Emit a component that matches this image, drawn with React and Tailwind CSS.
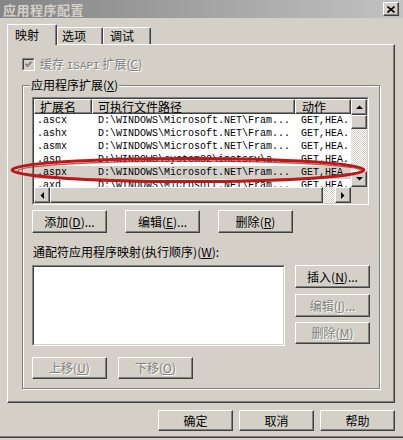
import React from 'react';

const cjk = "font-['Noto_Sans_CJK_SC','Liberation_Sans',sans-serif]";
const mono = "font-['Liberation_Mono',monospace]";
const raised =
  'border border-t-white border-l-white border-r-[#404040] border-b-[#404040] shadow-[inset_-1px_-1px_0_#808080] bg-[#d4d0c8]';
const checker =
  'bg-[repeating-conic-gradient(#ffffff_0_25%,#d4d0c8_0_50%)] bg-[length:2px_2px]';
const disabledText = 'text-[#808080] [text-shadow:1px_1px_0_#fff]';

function Mn({ c }) {
  return (
    <>
      (<span className="underline">{c}</span>)
    </>
  );
}

function Btn({ children, disabled, className = '' }) {
  return (
    <div
      className={`${raised} w-[75px] flex items-center justify-center text-[12px] leading-none ${
        disabled ? disabledText : 'text-black'
      } ${className}`}
    >
      {children}
    </div>
  );
}

function Arrow({ dir }) {
  const pts = {
    up: '0,4 3.5,0.5 7,4',
    down: '0,0 3.5,3.5 7,0',
    left: '4,0 0.5,3.5 4,7',
    right: '0,0 3.5,3.5 0,7',
  }[dir];
  const vertical = dir === 'up' || dir === 'down';
  return (
    <svg width={vertical ? 7 : 4} height={vertical ? 4 : 7} viewBox={vertical ? '0 0 7 4' : '0 0 4 7'}>
      <polygon points={pts} fill="#000" />
    </svg>
  );
}

function ScrollBtn({ dir }) {
  return (
    <div className={`${raised} w-[16px] h-[16px] shrink-0 flex items-center justify-center`}>
      <Arrow dir={dir} />
    </div>
  );
}

function Sunken({ className = '', innerClass = '', children }) {
  return (
    <div className={`border border-t-[#808080] border-l-[#808080] border-r-white border-b-white ${className}`}>
      <div
        className={`w-full h-full border border-t-[#404040] border-l-[#404040] border-r-[#d4d0c8] border-b-[#d4d0c8] ${innerClass}`}
      >
        {children}
      </div>
    </div>
  );
}

const rows = [
  ['.ascx', 'D:\\WINDOWS\\Microsoft.NET\\Fram...', 'GET,HEA.'],
  ['.ashx', 'D:\\WINDOWS\\Microsoft.NET\\Fram...', 'GET,HEA.'],
  ['.asmx', 'D:\\WINDOWS\\Microsoft.NET\\Fram...', 'GET,HEA.'],
  ['.asp', 'D:\\WINDOWS\\system32\\inetsrv\\a...', 'GET,HEA.'],
  ['.aspx', 'D:\\WINDOWS\\Microsoft.NET\\Fram...', 'GET,HEA.'],
  ['.axd', 'D:\\WINDOWS\\Microsoft.NET\\Fram...', 'GET,HEA.'],
];

function ListView() {
  return (
    <Sunken className="w-[337px] h-[108px]" innerClass="bg-white flex flex-col">
      <div className="flex h-[88px]">
        <div className="w-[317px] overflow-hidden">
          {/* header */}
          <div className={`flex h-[15px] text-[12px] leading-none ${cjk}`}>
            <div className={`${raised} w-[58px] shrink-0 flex items-center pl-[5px]`}>扩展名</div>
            <div className={`${raised} w-[203px] shrink-0 flex items-center pl-[5px]`}>可执行文件路径</div>
            <div className={`${raised} w-[56px] shrink-0 flex items-center pl-[6px]`}>动作</div>
          </div>
          {rows.map(([ext, path, act]) => (
            <div
              key={ext}
              className={`flex h-[13px] text-[10px] leading-[13px] whitespace-nowrap text-black ${mono} ${
                ext === '.aspx' ? 'bg-[#d4d0c8]' : ''
              }`}
            >
              <div className="w-[58px] shrink-0 pl-[3px] overflow-hidden">{ext}</div>
              <div className="w-[203px] shrink-0 pl-[6px] overflow-hidden">{path}</div>
              <div className="w-[56px] shrink-0 pl-[6px] overflow-hidden">{act}</div>
            </div>
          ))}
        </div>
        {/* vertical scrollbar */}
        <div className="w-[16px] flex flex-col">
          <ScrollBtn dir="up" />
          <div className={`${raised} h-[14px] w-[16px]`} />
          <div className={`flex-1 ${checker}`} />
          <ScrollBtn dir="down" />
        </div>
      </div>
      <div className="flex h-[16px]">
        <div className="w-[317px] flex">
          <ScrollBtn dir="left" />
          <div className={`${raised} w-[273px] h-[16px]`} />
          <div className={`flex-1 ${checker}`} />
          <ScrollBtn dir="right" />
        </div>
        <div className="w-[16px] bg-[#d4d0c8]" />
      </div>
    </Sunken>
  );
}

export default function App() {
  return (
    <div className={`relative w-[403px] h-[440px] overflow-hidden bg-[#d4d0c8] flex flex-col text-black ${cjk}`}>
      {/* Title bar */}
      <div className="h-[18px] flex items-center bg-gradient-to-r from-[#858585] to-[#c2c2c2] pl-[3px] pr-[4px]">
        <span className="text-[13px] font-bold text-[#d4d0c8] leading-none tracking-[0.5px]">应用程序配置</span>
        <div className={`${raised} ml-auto w-[16px] h-[14px] flex items-center justify-center`}>
          <svg width="8" height="7" viewBox="0 0 8 7">
            <path d="M0.5 0.5 L7.5 6.5 M7.5 0.5 L0.5 6.5" stroke="#000" strokeWidth="1.6" />
          </svg>
        </div>
      </div>

      {/* Tabs */}
      <div className="flex items-end h-[20px] mt-[6px] ml-[7px] text-[12px] leading-none">
        <div className="relative z-10 -mb-px h-[21px] w-[50px] bg-[#d4d0c8] border-l border-t border-r border-l-white border-t-white border-r-[#404040] shadow-[inset_-1px_0_0_#808080] rounded-t-[2px] flex items-center pl-[7px]">
          映射
        </div>
        <div className="h-[17px] w-[46px] border-l border-t border-r border-l-white border-t-white border-r-[#404040] shadow-[inset_-1px_0_0_#808080] rounded-t-[2px] flex items-center pl-[4px]">
          选项
        </div>
        <div className="h-[17px] w-[48px] border-l border-t border-r border-l-white border-t-white border-r-[#404040] shadow-[inset_-1px_0_0_#808080] rounded-t-[2px] flex items-center pl-[6px]">
          调试
        </div>
      </div>

      {/* Tab panel */}
      <div className="ml-[7px] w-[388px] h-[359px] border border-t-white border-l-white border-r-[#404040] border-b-[#404040] shadow-[inset_-1px_-1px_0_#808080] flex flex-col">
        {/* Checkbox */}
        <div className="mt-[13px] ml-[14px] h-[13px] flex items-center">
          <Sunken className="w-[13px] h-[13px]" innerClass="bg-[#d4d0c8] flex items-center justify-center">
            <svg width="7" height="7" viewBox="0 0 7 7">
              <path d="M0.5 3 L2.5 5 L6.5 1" fill="none" stroke="#808080" strokeWidth="1.8" />
            </svg>
          </Sunken>
          <span className={`ml-[5px] text-[12px] leading-none ${disabledText}`}>
            缓存 <span className={`${mono} text-[11px]`}>ISAPI</span> 扩展<Mn c="C" />
          </span>
        </div>

        {/* Group box */}
        <div className="relative mt-[14px] ml-[14px] w-[358px] h-[304px] border border-[#808080] shadow-[1px_1px_0_#fff,inset_1px_1px_0_#fff] flex flex-col">
          <span className="absolute -top-[7px] left-[7px] px-[1px] bg-[#d4d0c8] text-[12px] leading-[12px]">
            应用程序扩展<Mn c="X" />
          </span>

          <div className="mt-[11px] ml-[9px]">
            <ListView />
          </div>

          <div className="flex mt-[5px] ml-[9px] gap-[18px]">
            <Btn className="h-[23px]">添加<Mn c="D" />...</Btn>
            <Btn className="h-[23px]">编辑<Mn c="E" />...</Btn>
            <Btn className="h-[23px]">删除<Mn c="R" /></Btn>
          </div>

          <div className="mt-[13px] ml-[10px] text-[12px] leading-[12px]">
            通配符应用程序映射(执行顺序)<Mn c="W" />:
          </div>

          <div className="flex mt-[7px] ml-[9px]">
            <Sunken className="w-[253px] h-[81px]" innerClass="bg-white" />
            <div className="ml-[10px] flex flex-col">
              <Btn className="h-[23px]">插入<Mn c="N" />...</Btn>
              <Btn className="h-[23px] mt-[6px]" disabled>编辑<Mn c="I" />...</Btn>
              <Btn className="h-[22px] mt-[5px]" disabled>删除<Mn c="M" /></Btn>
            </div>
          </div>

          <div className="flex mt-[11px] ml-[9px] gap-[11px]">
            <Btn className="h-[22px]" disabled>上移<Mn c="U" /></Btn>
            <Btn className="h-[22px]" disabled>下移<Mn c="O" /></Btn>
          </div>
        </div>
      </div>

      {/* Dialog buttons */}
      <div className="flex justify-end gap-[6px] mt-[7px] pr-[8px]">
        <Btn className="h-[21px]">确定</Btn>
        <Btn className="h-[21px]">取消</Btn>
        <Btn className="h-[21px]">帮助</Btn>
      </div>

      <div className="mt-auto h-[1px] bg-[#808080]" />
      <div className="h-[1px] bg-[#404040]" />
      <div className="h-[2px]" />

      {/* Red highlight drawn over the .aspx row */}
      <svg className="absolute inset-0 pointer-events-none" width="403" height="440" viewBox="0 0 403 440">
        <ellipse cx="188" cy="170" rx="176" ry="11.5" fill="none" stroke="#b81818" strokeWidth="3" />
        <ellipse cx="190" cy="171" rx="172" ry="10" fill="none" stroke="#c01c1c" strokeWidth="1.4" opacity="0.75" />
      </svg>
    </div>
  );
}
